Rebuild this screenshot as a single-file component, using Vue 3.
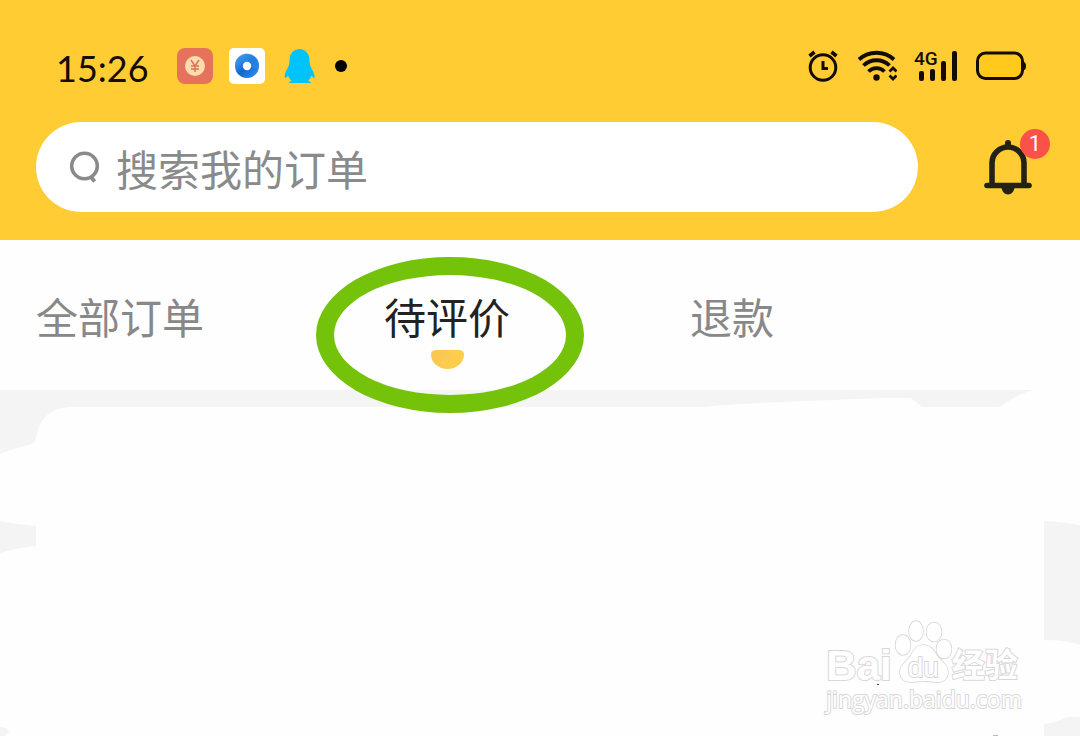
<template>
  <div class="page">
    <header class="header">
      <div class="status-bar">
        <div class="status-left">
          <span class="time">15:26</span>
          <svg class="icon" width="36" height="36" viewBox="0 0 36 36">
            <rect width="36" height="36" rx="8" fill="#e5735b" />
            <circle cx="18" cy="18" r="10" fill="#fbdcae" />
            <path d="M14 12l4 6 4-6M18 18v6M14 18h8M14 21h8" fill="none" stroke="#dc7055" stroke-width="1.4" />
          </svg>
          <svg class="icon" width="36" height="36" viewBox="0 0 36 36">
            <defs>
              <linearGradient id="disc" x1="0" y1="0" x2="1" y2="1">
                <stop offset="0" stop-color="#55b4f8" />
                <stop offset="0.5" stop-color="#1265d2" />
                <stop offset="1" stop-color="#2f97f0" />
              </linearGradient>
            </defs>
            <rect width="36" height="36" rx="5" fill="#fff" />
            <circle cx="18" cy="18" r="12" fill="url(#disc)" />
            <path d="M6 18C8 12 18 14 22 18C26 22 30 20 30 17A12 12 0 0 0 6 18z" fill="#2f8cea" opacity="0.6" />
            <circle cx="18" cy="18" r="4.2" fill="#fff" />
          </svg>
          <svg class="icon" width="38" height="36" viewBox="0 0 38 36">
            <path
              d="M18.500 1C12.500 1 8.500 6 8.500 12C8.500 15 8 18 6.500 20.500C4.500 24 3 27 4 30C5 30.500 6 29 7 27.500C8 30 9 31.500 10.500 33C8.500 33.500 8 34 8 35H30C30 34 29 33.500 27 33C28.500 31.500 29.500 30 30.500 27.500C31.500 29 32.500 30.500 33.500 30C34 27 32.500 24 30.500 20.500C29 18 28.500 15 28.500 12C28.500 6 24.500 1 18.500 1z"
              fill="#00c3fb"
            />
          </svg>
          <span class="dot"></span>
        </div>
        <div class="status-right">
          <svg class="icon" width="32" height="34" viewBox="0 0 32 34" fill="none" stroke="#150c00">
            <circle cx="15" cy="18.500" r="12.800" stroke-width="3" />
            <path d="M15 12v7.500h5" stroke-width="3" />
            <path d="M1.500 7l5-4M23.500 3l5 4" stroke-width="3.600" />
          </svg>
          <svg class="icon" width="40" height="34" viewBox="0 0 40 34" fill="none" stroke="#150c00">
            <path d="M2 10.500c10-9 25-9 35 0" stroke-width="3.800" />
            <path d="M6.500 16.500c7-7 19-7 26 0" stroke-width="3.800" />
            <path d="M11.500 22.500c4.500-4.500 11.500-4.500 16 0" stroke-width="3.800" />
            <circle cx="19.500" cy="28.500" r="3.200" fill="#150c00" stroke="none" />
            <path d="M32.500 22.500l3.500-3.500 3.500 3.500M32.500 26.500l3.500 3.500 3.500-3.500" stroke-width="2.800" />
          </svg>
          <svg class="icon" width="44" height="34" viewBox="0 0 44 34" fill="#150c00">
            <text x="0" y="16" class="network">4G</text>
            <rect x="5" y="22" width="5" height="10" rx="2" />
            <rect x="16" y="20" width="5" height="12" rx="2" />
            <rect x="27" y="12" width="5" height="20" rx="2" />
            <rect x="38" y="2" width="5" height="30" rx="2" />
          </svg>
          <svg class="icon" width="52" height="34" viewBox="0 0 52 34">
            <rect x="2.500" y="4" width="45" height="25.500" rx="8" fill="#ffc91d" stroke="#150c00" stroke-width="3" />
            <path d="M48 12.500q3 .5 3 4.500t-3 4.500z" fill="#150c00" />
          </svg>
        </div>
      </div>
      <div class="search-row">
        <label class="search-box">
          <svg class="icon" width="32" height="36" viewBox="0 0 32 36" fill="none" stroke="#8a8a8a" stroke-width="3.600">
            <circle cx="16.500" cy="17" r="12.800" />
            <path d="M22.500 27.500l4.200 5" />
          </svg>
          <input v-model="keyword" type="text" placeholder="搜索我的订单" aria-label="搜索我的订单" />
        </label>
        <button class="bell" type="button" aria-label="消息">
          <svg width="48" height="56" viewBox="0 0 48 56" fill="none" stroke="#242216" stroke-linecap="round">
            <path d="M8 45V24a16 16 0 0 1 32 0V45" stroke-width="5.600" />
            <path d="M24 4v3" stroke-width="6" />
            <path d="M3 46.500h42" stroke-width="5.600" />
            <path d="M17.500 48h13c0 4-3 7.500-6.500 7.500s-6.500-3.500-6.500-7.500z" fill="#242216" stroke="none" />
          </svg>
          <span class="badge">{{ unread }}</span>
        </button>
      </div>
    </header>

    <nav class="tabs">
      <button
        v-for="tab in tabs"
        :key="tab"
        type="button"
        class="tab"
        :class="{ active: tab === current }"
        @click="current = tab"
      >
        {{ tab }}
      </button>
    </nav>

    <main class="content">
      <svg class="backdrop" viewBox="0 0 1080 346" fill="#f4f4f4">
        <path d="M0 0H1032Q1014 6 999 17H922L911 8H880C810 11 740 13 703 17H68Q40 20 36 48Q36 54 24 56Q10 60 0 64z" />
        <path d="M0 131Q18 135 36 136V156Q16 158 0 163z" />
        <path d="M1044 131Q1064 132 1080 135V255Q1068 250 1044 250z" />
        <path d="M1044 334Q1058 332 1064 328Q1070 326 1080 327V346H1044z" />
        <path d="M0 337Q7 337 9 342L5 346H0z" />
        <rect x="877" y="294" width="2" height="1" fill="#333" />
        <rect x="993" y="345" width="5" height="1" fill="#bbb" />
      </svg>
      <div class="watermark">
        <div class="brand">
          <span class="bai">Bai</span>
          <span class="paw">
            <svg width="60" height="66" viewBox="0 0 60 66" fill="#fff" stroke="#d4d4d4" stroke-width="1.500">
              <ellipse cx="11" cy="25" rx="7.500" ry="10" />
              <ellipse cx="24" cy="11" rx="7" ry="10" />
              <ellipse cx="42" cy="12" rx="7.500" ry="9.500" />
              <ellipse cx="52" cy="29" rx="7.500" ry="9.500" />
              <path d="M31 25c7 0 10 4 13 9 4 7 12 10 12 18 0 7-5 10-10 10-6 0-9-1-14-1s-8 1-13 1c-6 0-11-3-11-10 0-8 8-11 11-17 3-6 6-10 12-10z" />
            </svg>
            <span class="du">du</span>
          </span>
          <span class="jingyan">经验</span>
        </div>
        <div class="site">jingyan.baidu.com</div>
      </div>
    </main>
  </div>
</template>

<script setup>
import { ref } from 'vue'

const tabs = ['全部订单', '待评价', '退款']
const current = ref('待评价')
const keyword = ref('')
const unread = ref(1)
</script>

<style>
body {
  margin: 0;
  background: #fefefe;
}
</style>

<style scoped>
.page {
  font-family: "Liberation Sans", "Noto Sans CJK SC", sans-serif;
  background: #fefefe;
  overflow: hidden;
}

.header {
  background: #ffcc33;
  padding-bottom: 28px;
}

.icon {
  display: block;
  flex: none;
}

.status-bar {
  display: flex;
  justify-content: space-between;
  align-items: center;
  height: 44px;
  padding: 44px 53px 34px 56px;
}

.status-left,
.status-right {
  display: flex;
  align-items: center;
}

.status-left {
  gap: 16px;
}

.status-right {
  gap: 17px;
}

.time {
  width: 105px;
  padding-top: 4px;
  font-family: Lato, sans-serif;
  font-size: 36px;
  line-height: 40px;
  color: #150c00;
}

.dot {
  width: 12px;
  height: 12px;
  border-radius: 50%;
  background: #000;
}

.network {
  font-family: Roboto, sans-serif;
  font-size: 19px;
  font-weight: 500;
}

.search-row {
  display: flex;
  align-items: center;
  gap: 66px;
  padding: 0 48px 0 36px;
}

.search-box {
  flex: 1;
  display: flex;
  align-items: center;
  gap: 16px;
  height: 90px;
  padding: 0 32px;
  box-sizing: border-box;
  border-radius: 45px;
  background: #fff;
}

.search-box input {
  flex: 1;
  min-width: 0;
  height: 64px;
  padding: 0;
  border: none;
  outline: none;
  background: transparent;
  font-family: "Noto Sans CJK SC", sans-serif;
  font-size: 42px;
  color: #333;
}

.search-box input::placeholder {
  color: #8a8a8a;
  opacity: 1;
}

.bell {
  position: relative;
  width: 48px;
  height: 56px;
  padding: 0;
  border: none;
  background: none;
}

.bell svg {
  display: block;
}

.badge {
  position: absolute;
  top: -10px;
  right: -18px;
  width: 30px;
  height: 30px;
  border-radius: 50%;
  background: #fa5148;
  color: #fff;
  font-family: Roboto, sans-serif;
  font-size: 22px;
  line-height: 30px;
  text-align: center;
}

.tabs {
  display: flex;
  gap: 180px;
  height: 150px;
  padding: 0 36px;
}

.tab {
  position: relative;
  height: 150px;
  padding: 44px 0 42px;
  border: none;
  background: none;
  font-family: "Noto Sans CJK SC", sans-serif;
  font-size: 42px;
  line-height: 64px;
  color: #888;
  white-space: nowrap;
}

.tab.active {
  color: #222;
}

.tab.active::before {
  content: '';
  position: absolute;
  left: 47px;
  top: 110px;
  width: 33px;
  height: 19px;
  border-radius: 5px 5px 17px 17px / 4px 4px 15px 15px;
  background: linear-gradient(120deg, #f8c656, #ffd047);
}

/* hand-drawn ring around the current tab */
.tab.active::after {
  content: '';
  position: absolute;
  z-index: 1;
  left: -68px;
  top: 17px;
  width: 268px;
  height: 156px;
  box-sizing: border-box;
  border: 18px solid #75c20b;
  border-radius: 50%;
}

.content {
  position: relative;
}

.backdrop {
  display: block;
  width: 100%;
}

.watermark {
  position: absolute;
  right: 58px;
  bottom: 24px;
  color: #fff;
  -webkit-text-stroke: 2px #d8d8d8;
  paint-order: stroke fill;
}

.brand {
  display: flex;
  align-items: flex-end;
  height: 66px;
}

.bai {
  font-size: 42px;
  font-weight: bold;
  line-height: 40px;
}

.paw {
  position: relative;
  height: 66px;
}

.paw svg {
  display: block;
}

.du {
  position: absolute;
  left: 16px;
  top: 32px;
  font-size: 28px;
  line-height: 32px;
}

.jingyan {
  font-family: "Noto Sans CJK SC", sans-serif;
  font-size: 33px;
  font-weight: bold;
  line-height: 46px;
}

.site {
  font-family: "Open Sans", sans-serif;
  font-size: 23px;
  line-height: 26px;
}
</style>
